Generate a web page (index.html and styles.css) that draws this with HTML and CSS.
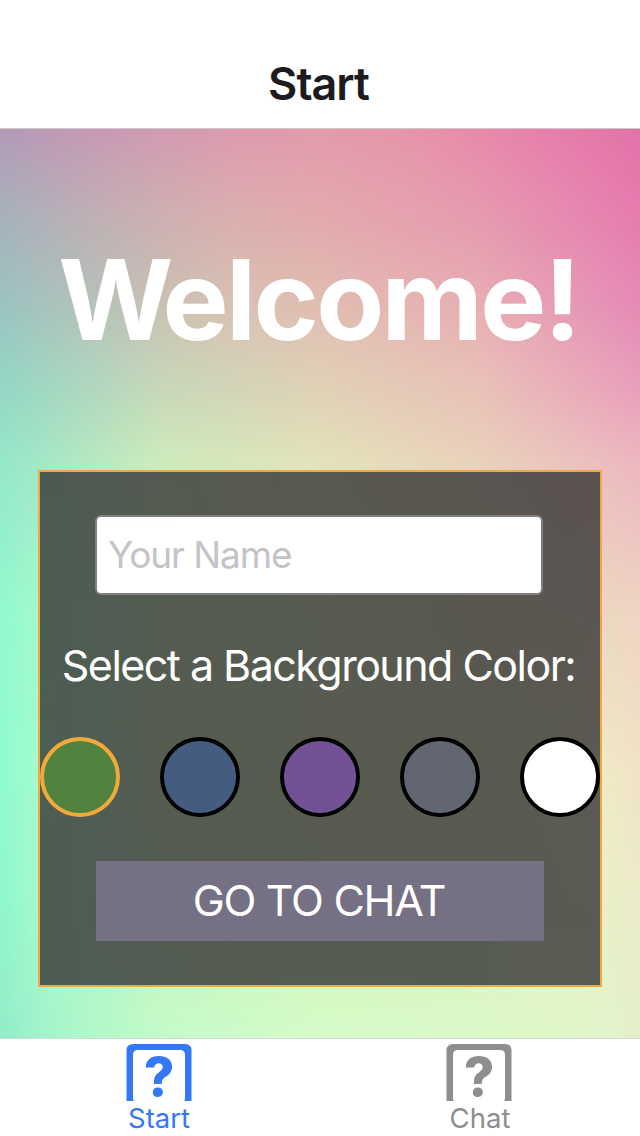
FILE: index.html
```html
<!DOCTYPE html>
<html lang="en">
<head>
<meta charset="utf-8">
<title>Start</title>
<link rel="stylesheet" href="styles.css">
</head>
<body>
<div class="app">
  <header class="header"><h1 class="header-title">Start</h1></header>
  <main class="screen">
    <div class="mesh" aria-hidden="true">
      <i class="band b1"></i><i class="band b2"></i><i class="band b3"></i><i class="band b4"></i><i class="band b5"></i><i class="band b6"></i><i class="band b7"></i><i class="band b8"></i><i class="band b9"></i>
    </div>
    <div class="content">
      <h2 class="welcome"><span class="initial">W</span>elcome!</h2>
      <section class="panel">
        <input class="name" type="text" placeholder="Your Name">
        <p class="label"><span>Select a Background Color:</span></p>
        <div class="swatches">
          <button class="swatch green selected" aria-label="Green"></button>
          <button class="swatch blue" aria-label="Blue"></button>
          <button class="swatch purple" aria-label="Purple"></button>
          <button class="swatch gray" aria-label="Gray"></button>
          <button class="swatch white" aria-label="White"></button>
        </div>
        <button class="go"><span>GO TO CHAT</span></button>
      </section>
    </div>
  </main>
  <nav class="tabs">
    <a class="tab active">
      <svg class="icon" viewBox="0 0 66 58" width="66" height="58"><path fill="currentColor" fill-rule="evenodd" d="M.5 58V7.500Q.5 1 7 1H59Q65.500 1 65.500 7.500V58H58.300Q59 56.500 59 54.500V12Q59 7 54 7H12Q7 7 7 12V54.500Q7 56.500 7.700 58Z"/><text x="33" y="53" text-anchor="middle" class="mark">?</text></svg>
      <span class="tab-start">Start</span>
    </a>
    <a class="tab">
      <svg class="icon" viewBox="0 0 66 58" width="66" height="58"><path fill="currentColor" fill-rule="evenodd" d="M.5 58V7.500Q.5 1 7 1H59Q65.500 1 65.500 7.500V58H58.300Q59 56.500 59 54.500V12Q59 7 54 7H12Q7 7 7 12V54.500Q7 56.500 7.700 58Z"/><text x="33" y="53" text-anchor="middle" class="mark">?</text></svg>
      <span class="tab-chat">Chat</span>
    </a>
  </nav>
</div>
</body>
</html>
```
FILE: styles.css
```css
* { box-sizing: border-box; }
body { margin: 0; font-family: Inter, "Liberation Sans", sans-serif; }
.app { width: 640px; height: 1136px; display: flex; flex-direction: column; background: #fff; overflow: hidden; }
.header { height: 129px; padding-top: 40px; display: flex; justify-content: center; align-items: center; border-bottom: 1px solid #cfc8cb; }
.header-title { margin: 0 3px 0 0; font-size: 45px; line-height: 88px; font-weight: 600; letter-spacing: -1px; color: #1c1c1e; }
.screen { height: 909px; display: grid; overflow: hidden; }
.mesh, .content { grid-area: 1 / 1; }
.mesh { display: grid; }

/* Each band fades in over the one before it, giving a two-way colour mesh. */
.band { grid-area: 1 / 1; mask-image: linear-gradient(to bottom, transparent var(--from), #000 var(--to)); }
.b1 { mask-image: none; background: linear-gradient(to right, #b29bb8, #c49ab4 12%, #d29bb2 25%, #dd9bb0 37%, #e49bab 50%, #e794ab 65%, #e88aab 75%, #e67dab 88%, #e273a8); }
.b2 { --from: 0px; --to: 92px; background: linear-gradient(to right, #a5b3bb, #bab1b6 12%, #cdb1b1 25%, #dbb0ae 37%, #e2abad 50%, #e5a3ae 63%, #e69bb0 75%, #e67db0); }
.b3 { --from: 92px; --to: 172px; background: linear-gradient(to right, #9bc3c0, #b2c1ba 12%, #c8c0b4 25%, #d9c0b2 37%, #e1bcb1 50%, #e8adb3 75%, #e58ab6); }
.b4 { --from: 172px; --to: 252px; background: linear-gradient(to right, #93d6c5, #c7d6b9 25%, #e0d0b6 50%, #e9c0b8 75%, #e99dbb); }
.b5 { --from: 252px; --to: 337px; background: linear-gradient(to right, #94e9ca, #a3e8c5 6%, #cdecbc 25%, #e3e3ba 50%, #e9d2bb 75%, #edb8c0); }
.b6 { --from: 337px; --to: 492px; background: linear-gradient(to right, #91f9d1, #a3fbcc 6%, #cdf2bd 25%, #daf0b8 50%, #e4dcb8 75%, #efd6c4); }
.b7 { --from: 492px; --to: 652px; background: linear-gradient(to right, #90fad2, #a4fccb 6%, #d0f4bb 25%, #dcf0b8 50%, #e2ecb8 75%, #f0ebc6 94%, #f1e3c7); }
.b8 { --from: 652px; --to: 772px; background: linear-gradient(to right, #90f6cf, #a5facb 6%, #ccf0bd 25%, #d8f0b8 50%, #dcf0bc 75%, #e9f0c8 94%, #ebecc8); }
.b9 { --from: 772px; --to: 909px; background: linear-gradient(to right, #92ecc9, #a5f5cb 8%, #c2fcc9 25%, #d5fcc8 50%, #ddf8c9 80%, #e2f5cb 94%, #e4eec9); }

.content { display: flex; flex-direction: column; align-items: center; z-index: 1; }
.welcome { margin: 101px 3px 0 0; height: 140px; line-height: 140px; font-size: 111px; font-weight: 700; letter-spacing: -2.6px; color: #fff; white-space: nowrap; }
.initial { letter-spacing: -11px; }
.panel { width: 564px; height: 517px; margin-top: 100px; padding-top: 43px; display: flex; flex-direction: column; align-items: center; border: 2px solid #f2a93b; background: rgba(54, 54, 54, .8); }
.name { width: 448px; height: 80px; margin-right: 2px; padding: 0 11px 2px; border: 2px solid #808080; border-radius: 6px; background: #fff; font: 400 37px Inter, sans-serif; letter-spacing: -1.1px; outline: none; }
.name::placeholder { color: #c4c4c6; opacity: 1; }
.label { margin: 40px 3px 1px 0; height: 60px; font-size: 43px; line-height: 60px; letter-spacing: -1.54px; color: #fff; white-space: nowrap; }
.swatches { width: 560px; margin-top: 41px; display: flex; justify-content: space-between; }
.swatch { width: 80px; height: 80px; padding: 0; border: 4px solid #000; border-radius: 50%; }
.selected { border-color: #f2a93b; }
.green { background: #51833f; }
.blue { background: #435c80; }
.purple { background: #725294; }
.gray { background: #616670; }
.white { background: #fff; }
.go { width: 448px; height: 80px; margin-top: 44px; padding: 0 2px 2px 0; border: 0; background: #757083; color: #fff; font: 400 43px/78px Inter, sans-serif; letter-spacing: -1.3px; }
.tabs { height: 98px; display: flex; border-top: 1px solid #d4d7d4; background: #fff; }
.tab { flex: 1; padding: 4px 2px 0 0; display: flex; flex-direction: column; align-items: center; color: #8e8e8e; font-size: 27.500px; line-height: 34px; }
.active { color: #3478f6; }
.icon { display: block; overflow: visible; }
.tab-chat { padding-left: 2px; }
.mark { fill: currentColor; font: 800 53px/1 Inter, sans-serif; }
```
